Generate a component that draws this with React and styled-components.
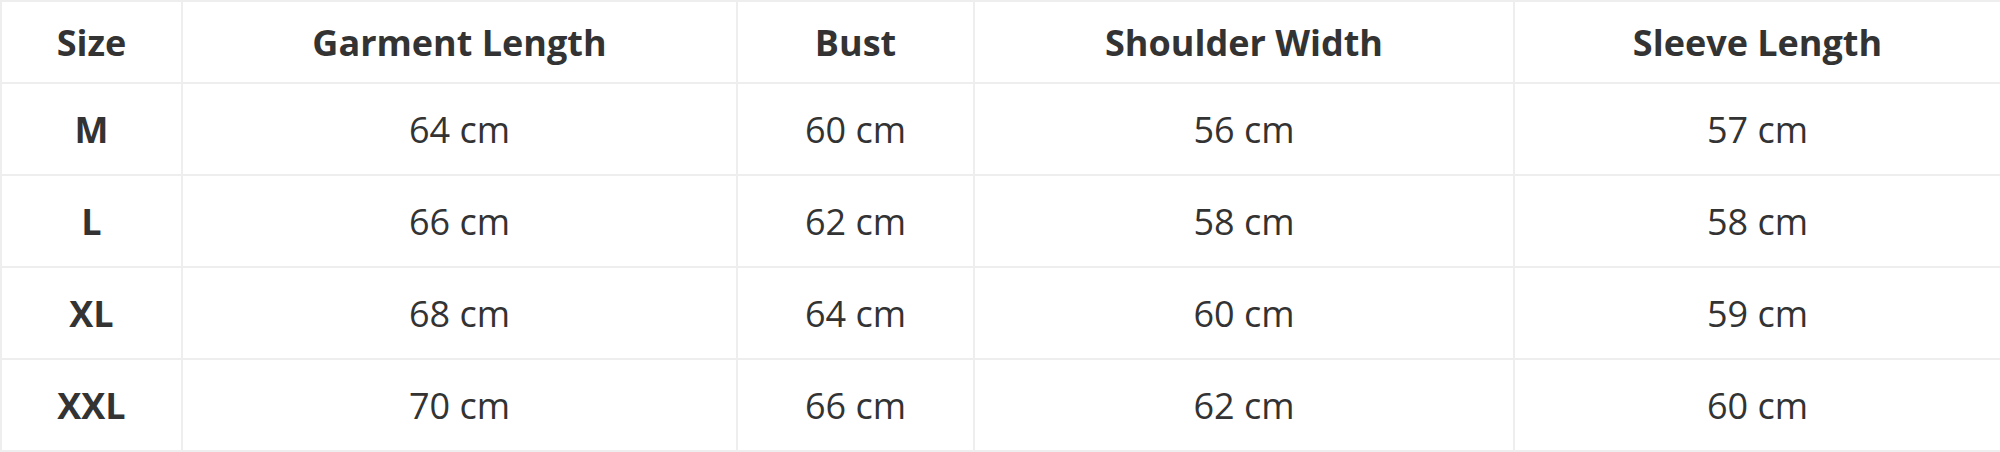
import styled, { createGlobalStyle } from "styled-components";

const GlobalStyle = createGlobalStyle`
  body {
    margin: 0;
    background: #fff;
  }
`;

const columns = [
  { key: "size", label: "Size", width: 181 },
  { key: "length", label: "Garment Length", width: 555 },
  { key: "bust", label: "Bust", width: 237 },
  { key: "shoulder", label: "Shoulder Width", width: 540 },
  { key: "sleeve", label: "Sleeve Length", width: 487 },
];

const rows = [
  { size: "M", length: 64, bust: 60, shoulder: 56, sleeve: 57 },
  { size: "L", length: 66, bust: 62, shoulder: 58, sleeve: 58 },
  { size: "XL", length: 68, bust: 64, shoulder: 60, sleeve: 59 },
  { size: "XXL", length: 70, bust: 66, shoulder: 62, sleeve: 60 },
];

const SizeTable = styled.table`
  width: 2000px;
  border-collapse: collapse;
  table-layout: fixed;
  font-family: "Open Sans", "Noto Sans", sans-serif;
  color: #333;
  border: 2px solid #eee;
`;

const HeadCell = styled.th`
  height: 80px;
  padding: 0;
  border: 2px solid #eee;
  font-size: 36px;
  font-weight: 700;
  text-align: center;
`;

const Cell = styled.td`
  height: 90px;
  padding: 0;
  border: 2px solid #eee;
  font-size: 36px;
  font-weight: ${(p) => (p.$strong ? 700 : 400)};
  text-align: center;
`;

const App = () => {
  return (
    <>
      <GlobalStyle />
      <SizeTable>
        <colgroup>
          {columns.map((c) => (
            <col key={c.key} style={{ width: c.width }} />
          ))}
        </colgroup>
        <thead>
          <tr>
            {columns.map((c) => (
              <HeadCell key={c.key}>{c.label}</HeadCell>
            ))}
          </tr>
        </thead>
        <tbody>
          {rows.map((r) => (
            <tr key={r.size}>
              <Cell $strong>{r.size}</Cell>
              <Cell>{r.length} cm</Cell>
              <Cell>{r.bust} cm</Cell>
              <Cell>{r.shoulder} cm</Cell>
              <Cell>{r.sleeve} cm</Cell>
            </tr>
          ))}
        </tbody>
      </SizeTable>
    </>
  );
};

export default App;
